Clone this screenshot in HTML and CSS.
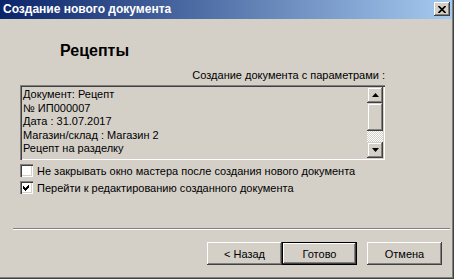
FILE: index.html
```html
<!DOCTYPE html>
<html>
    <head lang="ru">
        <meta charset="UTF-8">
        <title>Создание нового документа</title>
        <link rel="stylesheet" href="styles.css">
    </head>
    <body>
        <div class="window">
            <div class="frame">
                <div class="titlebar">
                    <span class="title">Создание нового документа</span>
                    <span class="close-btn">
                        <svg width="8" height="7" viewBox="0 0 8 7"><path d="M0.5 0 L7.5 7 M7.5 0 L0.5 7" stroke="#000" stroke-width="1.7"/></svg>
                    </span>
                </div>
                <div class="content">
                    <h1 class="heading">Рецепты</h1>
                    <div class="panel">
                        <p class="caption">Создание документа с параметрами :</p>
                        <div class="memo">
                            <div class="memo-text">
                                <div>Документ: Рецепт</div>
                                <div>№ ИП000007</div>
                                <div>Дата : 31.07.2017</div>
                                <div>Магазин/склад : Магазин 2</div>
                                <div>Рецепт на разделку</div>
                            </div>
                            <div class="scrollbar">
                                <span class="sb-btn">
                                    <svg width="7" height="4" viewBox="0 0 7 4"><path d="M3.5 0 L7 4 L0 4 Z" fill="#000"/></svg>
                                </span>
                                <span class="sb-thumb"></span>
                                <span class="sb-track"></span>
                                <span class="sb-btn">
                                    <svg width="7" height="4" viewBox="0 0 7 4"><path d="M0 0 L7 0 L3.5 4 Z" fill="#000"/></svg>
                                </span>
                            </div>
                        </div>
                        <label class="check-row"><span class="checkbox"></span>Не закрывать окно мастера после создания нового документа</label>
                        <label class="check-row"><span class="checkbox"><svg width="13" height="13" viewBox="0 0 13 13"><path d="M3 5 L5 7 L9 3 L9 6 L5 10 L3 8 Z" fill="#000" shape-rendering="crispEdges"/></svg></span>Перейти к редактированию созданного документа</label>
                    </div>
                    <div class="separator"></div>
                    <div class="buttons">
                        <span class="btn">&lt; Назад</span>
                        <span class="btn btn-default">Готово</span>
                        <span class="btn btn-cancel">Отмена</span>
                    </div>
                </div>
            </div>
        </div>
    </body>
</html>
```

FILE: styles.css
```css
*{
    margin:0;
    padding:0;
    box-sizing:border-box;
}
body{
    background-color:#d4d0c8;
    font-family:"Liberation Sans", Arial, sans-serif;
    font-size:11px;
    color:#000;
}
.window{
    width:454px;
    height:279px;
    border-right:1px solid #404040;
    border-bottom:1px solid #404040;
}
.frame{
    height:100%;
    border-right:1px solid #808080;
    border-bottom:1px solid #808080;
    display:flex;
    flex-direction:column;
}
.titlebar{
    height:19px;
    display:flex;
    align-items:center;
    justify-content:space-between;
    padding:0 2px 1px 3px;
    background:linear-gradient(to right, #0a246a, #a6caf0);
}
.title{
    color:#fff;
    font-weight:bold;
    font-size:12px;
}
.close-btn{
    width:16px;
    height:14px;
    display:flex;
    align-items:center;
    justify-content:center;
    background-color:#d4d0c8;
    box-shadow:inset -1px -1px #404040, inset 1px 1px #fff, inset -2px -2px #808080;
}
.content{
    flex:1;
    display:flex;
    flex-direction:column;
}
.heading{
    font-size:16px;
    line-height:18px;
    margin:23px 0 0 60px;
}
.panel{
    margin:0 67px 0 20px;
}
.caption{
    text-align:right;
    line-height:13px;
    margin-top:9px;
}
.memo{
    height:75px;
    margin-top:3px;
    display:flex;
    box-shadow:inset 1px 1px #808080, inset 2px 2px #404040, inset -1px -1px #fff, inset -2px -2px #d4d0c8;
    padding:2px;
}
.memo-text{
    flex:1;
    padding:1px 0 0 1px;
    line-height:13.5px;
}
.scrollbar{
    width:16px;
    display:flex;
    flex-direction:column;
}
.sb-btn, .sb-thumb{
    background-color:#d4d0c8;
    box-shadow:inset -1px -1px #404040, inset 1px 1px #d4d0c8, inset -2px -2px #808080, inset 2px 2px #fff;
}
.sb-btn{
    height:16px;
    display:flex;
    align-items:center;
    justify-content:center;
}
.sb-thumb{
    height:28px;
}
.sb-track{
    flex:1;
    background:repeating-conic-gradient(#d4d0c8 0 25%, #fff 0 50%) 0 0/2px 2px;
}
.check-row{
    display:flex;
    align-items:center;
    height:17px;
}
.check-row:first-of-type{
    margin-top:2px;
}
.checkbox{
    width:13px;
    height:13px;
    margin-right:4px;
    background-color:#fff;
    box-shadow:inset 1px 1px #808080, inset 2px 2px #404040, inset -1px -1px #fff, inset -2px -2px #d4d0c8;
}
.checkbox svg{
    display:block;
}
.separator{
    margin:auto 2px 0 13px;
    height:2px;
    border-top:1px solid #808080;
    border-bottom:1px solid #fff;
}
.buttons{
    display:flex;
    justify-content:flex-end;
    padding:12px 10px 12px 0;
}
.btn{
    width:75px;
    height:23px;
    display:flex;
    align-items:center;
    justify-content:center;
    background-color:#d4d0c8;
    box-shadow:inset -1px -1px #404040, inset 1px 1px #fff, inset -2px -2px #808080;
}
.btn-default{
    border:1px solid #000;
}
.btn-cancel{
    margin-left:10px;
}
```
